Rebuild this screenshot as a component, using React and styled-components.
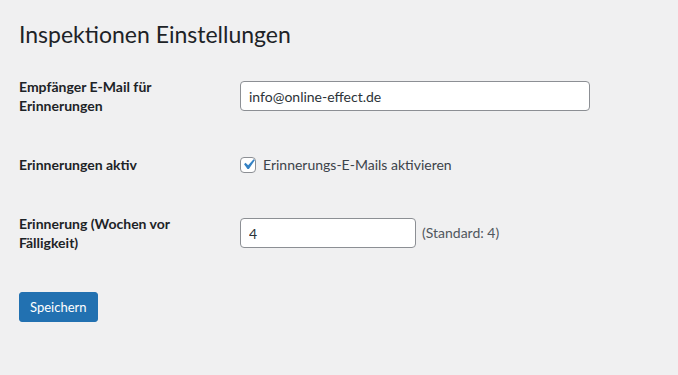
import styled, { createGlobalStyle } from "styled-components"

const Global = createGlobalStyle`
  html, body {
    margin: 0;
    padding: 0;
    background: #f0f0f1;
  }
  body {
    font-family: Lato, "Noto Sans", sans-serif;
    color: #1d2327;
    font-size: 13px;
    line-height: 1.4;
  }
`

const Wrap = styled.div`
  padding: 10px 19px 40px 19px;
`

const Title = styled.h1`
  margin: 0;
  padding: 9px 0 4px;
  font-size: 23px;
  font-weight: 400;
  line-height: 30px;
  color: #1d2327;
`

const Form = styled.form`
  margin-top: 4px;
`

const Row = styled.div`
  display: grid;
  grid-template-columns: 221px 1fr;
  align-items: center;
`

const Label = styled.label`
  align-self: start;
  padding: 20px 10px 20px 0;
  font-size: 14px;
  font-weight: 700;
  line-height: 19px;
  color: #1d2327;
`

const Field = styled.div`
  display: flex;
  align-items: center;
  padding: 15px 0;
`

const TextInput = styled.input`
  box-sizing: border-box;
  width: ${(p) => p.$width}px;
  height: 30px;
  padding: 0 8px;
  border: 1px solid #8c8f94;
  border-radius: 4px;
  background: #fff;
  font-family: inherit;
  font-size: 14px;
  color: #2c3338;
  outline: none;
`

const Hint = styled.span`
  margin-left: 6px;
  font-size: 14px;
  color: #50575e;
`

const CheckLabel = styled.label`
  display: flex;
  align-items: center;
  gap: 7px;
  font-size: 14px;
  color: #3c434a;
`

const Box = styled.span`
  box-sizing: border-box;
  width: 16px;
  height: 16px;
  border: 1px solid #8c8f94;
  border-radius: 4px;
  background: #fff;
  display: flex;
  align-items: center;
  justify-content: center;
  overflow: hidden;
  svg {
    width: 21px;
    height: 21px;
    flex: none;
  }
`

const Actions = styled.div`
  padding-top: 20px;
`

const Button = styled.button`
  height: 30px;
  padding: 0 10px;
  border: 1px solid #2271b1;
  border-radius: 3px;
  background: #2271b1;
  color: #fff;
  font-family: inherit;
  font-size: 13px;
  cursor: pointer;
`

export default function App() {
  return (
    <Wrap>
      <Global />
      <Title>Inspektionen Einstellungen</Title>
      <Form onSubmit={(e) => e.preventDefault()}>
        <Row>
          <Label>Empfänger E-Mail für Erinnerungen</Label>
          <Field>
            <TextInput $width={350} defaultValue="info@online-effect.de" />
          </Field>
        </Row>
        <Row>
          <Label>Erinnerungen aktiv</Label>
          <Field>
            <CheckLabel>
              <Box>
                <svg viewBox="0 0 20 20">
                  <path d="M14.83 4.89l1.34.94-5.81 8.38H9.02L5.78 9.67l1.34-1.25 2.57 2.4z" fill="#3582c4" />
                </svg>
              </Box>
              Erinnerungs-E-Mails aktivieren
            </CheckLabel>
          </Field>
        </Row>
        <Row>
          <Label>Erinnerung (Wochen vor Fälligkeit)</Label>
          <Field>
            <TextInput $width={176} defaultValue="4" />
            <Hint>(Standard: 4)</Hint>
          </Field>
        </Row>
        <Actions>
          <Button type="submit">Speichern</Button>
        </Actions>
      </Form>
    </Wrap>
  )
}
